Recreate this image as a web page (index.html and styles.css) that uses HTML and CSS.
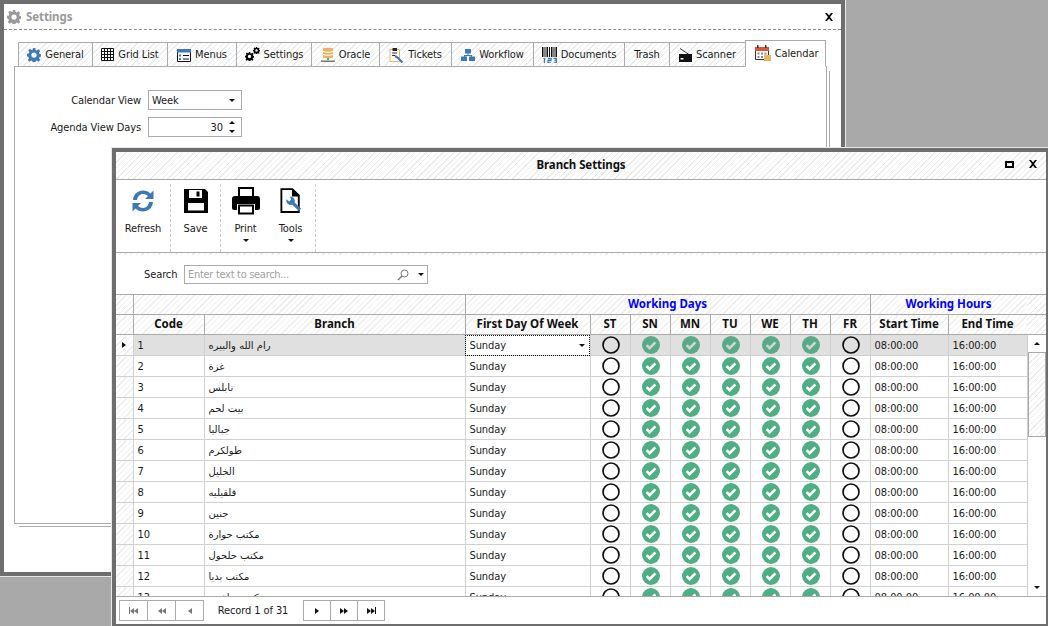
FILE: index.html
```html
<!DOCTYPE html>
<html lang="en">
  <head>
    <meta charset="UTF-8" />
    <title>Branch Settings</title>
    <link rel="stylesheet" href="styles.css">
  </head>
  <body>
    <svg class="defs" width="0" height="0">
      <symbol id="yes" viewBox="0 0 18 18">
        <circle cx="9" cy="9" r="9" fill="#4fae84"/>
        <path d="M4.6 9.2 7.6 12.2 13.4 6.4" fill="none" stroke="#fff" stroke-width="2.6"/>
      </symbol>
      <symbol id="yes-dim" viewBox="0 0 18 18">
        <circle cx="9" cy="9" r="9" fill="#5aa988"/>
        <path d="M4.6 9.2 7.6 12.2 13.4 6.4" fill="none" stroke="#c9d8d1" stroke-width="2.6"/>
      </symbol>
      <symbol id="no" viewBox="0 0 18 18">
        <circle cx="9" cy="9" r="8" fill="none" stroke="#111" stroke-width="1.7"/>
      </symbol>
      <symbol id="gear" viewBox="0 0 16 16">
        <path d="M6.6 0h2.8l.4 2.2 1.4.6 1.9-1.3 2 2-1.3 1.9.6 1.4 2.1.4v2.800l-2.100.4-.6 1.400 1.300 1.900-2 2-1.900-1.300-1.400.6-.4 2.100H6.600l-.4-2.100-1.400-.6-1.900 1.300-2-2 1.300-1.900-.6-1.400L0 9.400V6.600l2.100-.4.6-1.400L1.400 2.900l2-2 1.900 1.300 1.400-.6z M8 5a3 3 0 1 0 0 6 3 3 0 0 0 0-6z" fill-rule="evenodd"/>
      </symbol>
      <symbol id="x" viewBox="0 0 10 8">
        <path d="M1 0h2l2 2.500L7 0h2L6 4l3 4H7L5 5.500 3 8H1l3-4z"/>
      </symbol>
    </svg>

    <div class="window settings">
      <div class="settings-title">
        <svg class="title-gear" width="14" height="14"><use href="#gear"/></svg>
        <span>Settings</span>
        <svg class="close" width="10" height="8"><use href="#x"/></svg>
      </div>
      <div class="tabs">
        <div class="tab w-general">
          <svg class="blue" width="14" height="14"><use href="#gear"/></svg>General
        </div>
        <div class="tab w-grid">
          <svg width="13" height="13" viewBox="0 0 13 13" fill="none" stroke="#111"><path d="M.5.5h12v12H.500z M.5 3.500h12 M.5 6.500h12 M.5 9.500h12 M3.500.5v12 M6.500.5v12 M9.500.5v12"/></svg>Grid List
        </div>
        <div class="tab w-menus">
          <svg width="14" height="14" viewBox="0 0 14 14"><path d="M.5 1.500h13v12H.500z" fill="#fff" stroke="#111"/><path d="M0 1h14v3.500H0z" fill="#3d7ab5"/><path d="M2 6.500h2v2H2zM2 10h2v2H2z" fill="#3d7ab5"/><path d="M6 7.500h6M6 11h6" stroke="#111"/></svg>Menus
        </div>
        <div class="tab w-settings">
          <svg width="15" height="15" viewBox="0 0 15 15"><use href="#gear" x="0" y="5" width="9" height="9"/><use href="#gear" x="8" y="0" width="7" height="7"/></svg>Settings
        </div>
        <div class="tab w-oracle">
          <svg width="14" height="16" viewBox="0 0 14 16"><path d="M2 1.500C2 .5 12 .5 12 1.500v9c0 1-10 1-10 0z" fill="#e9b35f"/><path d="M2 4.500c2 1 8 1 10 0M2 7.500c2 1 8 1 10 0" stroke="#fff" fill="none"/><path d="M6 11h2v2H6z" fill="#4fae84"/><path d="M0 13.500h14v1.500H0z" fill="#777"/></svg>Oracle
        </div>
        <div class="tab w-tickets">
          <svg width="15" height="16" viewBox="0 0 15 16"><path d="M1 2.500h9.500v12H1z" fill="#fff" stroke="#e9b35f"/><path d="M3.500 1h4.500v3H3.500z" fill="#222"/><path d="M3 6h5M3 8.500h3" stroke="#333"/><path d="M6 9l2.500 1.500 5 5" stroke="#3d7ab5" stroke-width="2.200" fill="none"/></svg>Tickets
        </div>
        <div class="tab w-workflow">
          <svg width="14" height="12" viewBox="0 0 14 12" fill="#3d7ab5"><path d="M4 0h6v4.500H4zM0 7.500h6V12H0zM8 7.500h6V12H8z"/><path d="M6.500 4h1v2h3.500v2h-1V7H4v1H3V6h3.500z"/></svg>Workflow
        </div>
        <div class="tab w-documents">
          <svg width="15" height="16" viewBox="0 0 15 16"><path d="M0 0h1.500v10H0zM2.500 0h1v10h-1zM4.500 0h1.500v10H4.500zM7 0h1v10H7zM9 0h1.500v10H9zM11.500 0h1v10h-1zM13.500 0h1.500v10h-1.500z" fill="#111"/><path d="M1.500 11.500h1v4.500M6 11.500h3v2H6v2.500h3M11.500 11.500h3v2h-2 2v2.500h-3" fill="none" stroke="#3d7ab5" stroke-width="1.300"/></svg>Documents
        </div>
        <div class="tab w-trash">Trash</div>
        <div class="tab w-scanner">
          <svg width="13" height="14" viewBox="0 0 13 14"><path d="M1 .5 10 6.500" stroke="#333" fill="none"/><path d="M0 6h13v8H0z" fill="#111"/><path d="M1.500 10h3v1.500h-3z" fill="#fff"/></svg>Scanner
        </div>
        <div class="tab active w-calendar">
          <svg width="16" height="17" viewBox="0 0 16 17"><path d="M.5 3.500h13v11H.500z" fill="#fff" stroke="#333"/><path d="M0 2h14v4H0z" fill="#d2573f"/><path d="M2 0h1.500v3H2zM10 0h1.500v3H10z" fill="#333"/><path d="M2.500 7.500h2v2h-2zM6 7.500h2v2H6zM2.500 11h2v2h-2zM6 11h2v2H6zM9.500 7.500h2v2h-2z" fill="#888"/><path d="M9 10h7v6H9z" fill="#e9b35f"/></svg>Calendar
        </div>
      </div>
      <div class="page">
        <div class="form">
          <div class="form-row">
            <label>Calendar View</label>
            <div class="field">
              <span class="field-text">Week</span>
              <i class="arrow-down"></i>
            </div>
          </div>
          <div class="form-row">
            <label>Agenda View Days</label>
            <div class="field">
              <span class="field-text right">30</span>
              <span class="spin"><i class="arrow-up"></i><i class="arrow-down"></i></span>
            </div>
          </div>
        </div>
      </div>
    </div>

    <div class="window branch">
      <div class="branch-title hatch">
        <span>Branch Settings</span>
        <span class="win-buttons"><i class="restore"></i><svg class="close" width="10" height="8"><use href="#x"/></svg></span>
      </div>

      <div class="ribbon">
        <div class="group">
          <div class="tool w-refresh">
            <svg width="26" height="26" viewBox="0 0 26 26" fill="#3d7ab5"><path d="M3 12C3.500 6 8 2.500 13 2.500c3 0 5.500 1 7.500 3L23.500 2.500V11h-8.500l3-3c-1.400-1.300-3-2-5-2-3 0-5.500 2.200-6 6z"/><path d="M23 14c-.5 6-5 9.500-10 9.500-3 0-5.500-1-7.500-3L2.500 23.500V15H11l-3 3c1.400 1.300 3 2 5 2 3 0 5.500-2.200 6-6z"/></svg>
            <span>Refresh</span>
          </div>
        </div>
        <div class="group">
          <div class="tool w-save">
            <svg width="26" height="26" viewBox="0 0 26 26"><path d="M1 1h21l3 3v21H1z" fill="#000"/><path d="M6 2h13v8H6z" fill="#fff"/><path d="M13.500 3.500h3v5h-3z" fill="#000"/><path d="M5 15h16v7.500H5z" fill="#fff"/></svg>
            <span>Save</span>
          </div>
        </div>
        <div class="group last">
          <div class="tool w-print">
            <svg width="28" height="28" viewBox="0 0 28 28"><path d="M7 1h14v9H7z" fill="#fff" stroke="#000" stroke-width="2"/><path d="M3 9h22a3 3 0 0 1 3 3v9a2 2 0 0 1-2 2h-3v-6H5v6H2a2 2 0 0 1-2-2v-9a3 3 0 0 1 3-3z" fill="#000"/><path d="M7 18.500h14v8H7z" fill="#fff" stroke="#000" stroke-width="2"/></svg>
            <span>Print</span>
            <i class="arrow-down"></i>
          </div>
          <div class="tool w-tools">
            <svg width="22" height="28" viewBox="0 0 24 28"><path d="M1.500 1h12l7 7v18h-19z" fill="#fff" stroke="#000" stroke-width="2"/><path d="M13 1v8h8" fill="#000"/><path d="M11 9a5 5 0 0 1 5 6.500l7 7-2.500 2.500-7-7A5 5 0 0 1 7 12l3 2.500 2-2z" fill="#3d7ab5"/></svg>
            <span>Tools</span>
            <i class="arrow-down"></i>
          </div>
        </div>
      </div>
      <div class="strip hatch"></div>

      <div class="search-bar">
        <label>Search</label>
        <div class="search-box">
          <span class="placeholder">Enter text to search...</span>
          <svg width="12" height="12" viewBox="0 0 12 12" fill="none" stroke="#777"><circle cx="7.500" cy="4.500" r="3.500"/><path d="M5 7 1 11" stroke-width="1.500"/></svg>
          <i class="arrow-down"></i>
        </div>
      </div>

      <div class="grid-wrap">
        <table class="grid">
          <colgroup>
            <col class="c-ind"><col class="c-code"><col class="c-branch"><col class="c-first">
            <col class="c-day"><col class="c-day"><col class="c-day"><col class="c-day">
            <col class="c-day"><col class="c-day"><col class="c-day">
            <col class="c-start"><col class="c-end">
          </colgroup>
          <tr class="band">
            <th class="ind"></th>
            <th colspan="2"></th>
            <th colspan="8" class="blue-head">Working Days</th>
            <th colspan="2" class="blue-head">Working Hours</th>
          </tr>
          <tr class="head">
            <th class="ind"></th>
            <th>Code</th><th>Branch</th><th>First Day Of Week</th>
            <th>ST</th><th>SN</th><th>MN</th><th>TU</th><th>WE</th><th>TH</th><th>FR</th>
            <th>Start Time</th><th>End Time</th>
          </tr>
          <tr class="selected">
            <td class="ind"><i class="arrow-right"></i></td><td>1</td><td class="ar" dir="rtl">رام الله والبيره</td>
            <td class="editor"><span>Sunday</span><i class="arrow-down"></i></td>
            <td><svg><use href="#no"/></svg></td><td><svg><use href="#yes-dim"/></svg></td><td><svg><use href="#yes-dim"/></svg></td><td><svg><use href="#yes-dim"/></svg></td><td><svg><use href="#yes-dim"/></svg></td><td><svg><use href="#yes-dim"/></svg></td><td><svg><use href="#no"/></svg></td>
            <td>08:00:00</td><td>16:00:00</td>
          </tr>
          <tr>
            <td class="ind"></td><td>2</td><td class="ar" dir="rtl">غزة</td><td>Sunday</td>
            <td><svg><use href="#no"/></svg></td><td><svg><use href="#yes"/></svg></td><td><svg><use href="#yes"/></svg></td><td><svg><use href="#yes"/></svg></td><td><svg><use href="#yes"/></svg></td><td><svg><use href="#yes"/></svg></td><td><svg><use href="#no"/></svg></td>
            <td>08:00:00</td><td>16:00:00</td>
          </tr>
          <tr>
            <td class="ind"></td><td>3</td><td class="ar" dir="rtl">نابلس</td><td>Sunday</td>
            <td><svg><use href="#no"/></svg></td><td><svg><use href="#yes"/></svg></td><td><svg><use href="#yes"/></svg></td><td><svg><use href="#yes"/></svg></td><td><svg><use href="#yes"/></svg></td><td><svg><use href="#yes"/></svg></td><td><svg><use href="#no"/></svg></td>
            <td>08:00:00</td><td>16:00:00</td>
          </tr>
          <tr>
            <td class="ind"></td><td>4</td><td class="ar" dir="rtl">بيت لحم</td><td>Sunday</td>
            <td><svg><use href="#no"/></svg></td><td><svg><use href="#yes"/></svg></td><td><svg><use href="#yes"/></svg></td><td><svg><use href="#yes"/></svg></td><td><svg><use href="#yes"/></svg></td><td><svg><use href="#yes"/></svg></td><td><svg><use href="#no"/></svg></td>
            <td>08:00:00</td><td>16:00:00</td>
          </tr>
          <tr>
            <td class="ind"></td><td>5</td><td class="ar" dir="rtl">جباليا</td><td>Sunday</td>
            <td><svg><use href="#no"/></svg></td><td><svg><use href="#yes"/></svg></td><td><svg><use href="#yes"/></svg></td><td><svg><use href="#yes"/></svg></td><td><svg><use href="#yes"/></svg></td><td><svg><use href="#yes"/></svg></td><td><svg><use href="#no"/></svg></td>
            <td>08:00:00</td><td>16:00:00</td>
          </tr>
          <tr>
            <td class="ind"></td><td>6</td><td class="ar" dir="rtl">طولكرم</td><td>Sunday</td>
            <td><svg><use href="#no"/></svg></td><td><svg><use href="#yes"/></svg></td><td><svg><use href="#yes"/></svg></td><td><svg><use href="#yes"/></svg></td><td><svg><use href="#yes"/></svg></td><td><svg><use href="#yes"/></svg></td><td><svg><use href="#no"/></svg></td>
            <td>08:00:00</td><td>16:00:00</td>
          </tr>
          <tr>
            <td class="ind"></td><td>7</td><td class="ar" dir="rtl">الخليل</td><td>Sunday</td>
            <td><svg><use href="#no"/></svg></td><td><svg><use href="#yes"/></svg></td><td><svg><use href="#yes"/></svg></td><td><svg><use href="#yes"/></svg></td><td><svg><use href="#yes"/></svg></td><td><svg><use href="#yes"/></svg></td><td><svg><use href="#no"/></svg></td>
            <td>08:00:00</td><td>16:00:00</td>
          </tr>
          <tr>
            <td class="ind"></td><td>8</td><td class="ar" dir="rtl">قلقيليه</td><td>Sunday</td>
            <td><svg><use href="#no"/></svg></td><td><svg><use href="#yes"/></svg></td><td><svg><use href="#yes"/></svg></td><td><svg><use href="#yes"/></svg></td><td><svg><use href="#yes"/></svg></td><td><svg><use href="#yes"/></svg></td><td><svg><use href="#no"/></svg></td>
            <td>08:00:00</td><td>16:00:00</td>
          </tr>
          <tr>
            <td class="ind"></td><td>9</td><td class="ar" dir="rtl">جنين</td><td>Sunday</td>
            <td><svg><use href="#no"/></svg></td><td><svg><use href="#yes"/></svg></td><td><svg><use href="#yes"/></svg></td><td><svg><use href="#yes"/></svg></td><td><svg><use href="#yes"/></svg></td><td><svg><use href="#yes"/></svg></td><td><svg><use href="#no"/></svg></td>
            <td>08:00:00</td><td>16:00:00</td>
          </tr>
          <tr>
            <td class="ind"></td><td>10</td><td class="ar" dir="rtl">مكتب حوارة</td><td>Sunday</td>
            <td><svg><use href="#no"/></svg></td><td><svg><use href="#yes"/></svg></td><td><svg><use href="#yes"/></svg></td><td><svg><use href="#yes"/></svg></td><td><svg><use href="#yes"/></svg></td><td><svg><use href="#yes"/></svg></td><td><svg><use href="#no"/></svg></td>
            <td>08:00:00</td><td>16:00:00</td>
          </tr>
          <tr>
            <td class="ind"></td><td>11</td><td class="ar" dir="rtl">مكتب حلحول</td><td>Sunday</td>
            <td><svg><use href="#no"/></svg></td><td><svg><use href="#yes"/></svg></td><td><svg><use href="#yes"/></svg></td><td><svg><use href="#yes"/></svg></td><td><svg><use href="#yes"/></svg></td><td><svg><use href="#yes"/></svg></td><td><svg><use href="#no"/></svg></td>
            <td>08:00:00</td><td>16:00:00</td>
          </tr>
          <tr>
            <td class="ind"></td><td>12</td><td class="ar" dir="rtl">مكتب بديا</td><td>Sunday</td>
            <td><svg><use href="#no"/></svg></td><td><svg><use href="#yes"/></svg></td><td><svg><use href="#yes"/></svg></td><td><svg><use href="#yes"/></svg></td><td><svg><use href="#yes"/></svg></td><td><svg><use href="#yes"/></svg></td><td><svg><use href="#no"/></svg></td>
            <td>08:00:00</td><td>16:00:00</td>
          </tr>
          <tr>
            <td class="ind"></td><td>13</td><td class="ar" dir="rtl">مكتب سلفيت</td><td>Sunday</td>
            <td><svg><use href="#no"/></svg></td><td><svg><use href="#yes"/></svg></td><td><svg><use href="#yes"/></svg></td><td><svg><use href="#yes"/></svg></td><td><svg><use href="#yes"/></svg></td><td><svg><use href="#yes"/></svg></td><td><svg><use href="#no"/></svg></td>
            <td>08:00:00</td><td>16:00:00</td>
          </tr>
        </table>
        <div class="scroll">
          <div class="scroll-corner hatch"></div>
          <div class="scroll-corner hatch"></div>
          <div class="scroll-btn"><i class="arrow-up"></i></div>
          <div class="scroll-track">
            <div class="scroll-thumb hatch"></div>
          </div>
          <div class="scroll-btn"><i class="arrow-down"></i></div>
        </div>
      </div>

      <div class="pager">
        <div class="pager-group">
          <span class="pager-btn dim"><i class="bar"></i><i class="arrow-left"></i><i class="arrow-left"></i></span>
          <span class="pager-btn dim"><i class="arrow-left"></i><i class="arrow-left"></i></span>
          <span class="pager-btn dim"><i class="arrow-left"></i></span>
        </div>
        <span class="record">Record 1 of 31</span>
        <div class="pager-group next">
          <span class="pager-btn"><i class="arrow-right"></i></span>
          <span class="pager-btn"><i class="arrow-right"></i><i class="arrow-right"></i></span>
          <span class="pager-btn"><i class="arrow-right"></i><i class="arrow-right"></i><i class="bar"></i></span>
        </div>
      </div>
    </div>
  </body>
</html>
```

FILE: styles.css
```css
html,
body {
  margin: 0;
  height: 100%;
}
body {
  position: relative;
  width: 1048px;
  height: 626px;
  overflow: hidden;
  background-color: #a9a9a9;
  font-family: "DejaVu Sans Condensed", "Liberation Sans", sans-serif;
  font-size: 11px;
  letter-spacing: -0.1px;
  color: #1a1a1a;
}
.defs {
  position: absolute;
}
i {
  display: block;
}
.hatch,
.tab,
.ind,
.band th,
.head th {
  background-color: #fff;
  background-image: repeating-linear-gradient(135deg, #fff 0, #fff 3px, #ebebeb 3px, #ebebeb 4px);
}
.arrow-down {
  width: 0;
  height: 0;
  border-left: 3px solid transparent;
  border-right: 3px solid transparent;
  border-top: 3px solid #111;
}
.arrow-up {
  width: 0;
  height: 0;
  border-left: 3px solid transparent;
  border-right: 3px solid transparent;
  border-bottom: 3px solid #111;
}
.arrow-right {
  width: 0;
  height: 0;
  border-top: 3px solid transparent;
  border-bottom: 3px solid transparent;
  border-left: 4px solid #111;
}
.arrow-left {
  width: 0;
  height: 0;
  border-top: 3px solid transparent;
  border-bottom: 3px solid transparent;
  border-right: 4px solid #777;
}
.bar {
  width: 1px;
  height: 7px;
  background-color: #111;
}
.close {
  fill: #000;
}

/* windows */
.window {
  position: absolute;
  box-sizing: border-box;
  border: 4px solid #6e6e6e;
  outline: 1px solid #e8e8e8;
  background-color: #fff;
}
.settings {
  left: 0;
  top: 0;
  width: 845px;
  height: 576px;
}
.branch {
  left: 112px;
  top: 148px;
  width: 938px;
  height: 480px;
}

/* settings window */
.settings-title {
  height: 26px;
  box-sizing: border-box;
  border-bottom: 1px dashed #8a8a8a;
  display: flex;
  align-items: center;
  padding: 0 7px 0 3px;
  font-family: "Noto Sans", sans-serif;
  font-weight: bold;
  color: #999;
  font-size: 11.5px;
}
.title-gear {
  fill: #999;
  margin-right: 5px;
}
.settings-title .close {
  margin-left: auto;
}
.tabs {
  display: flex;
  align-items: flex-end;
  height: 36px;
  padding-left: 14px;
  box-sizing: border-box;
  position: relative;
  z-index: 1;
}
.tab {
  box-sizing: border-box;
  height: 25px;
  margin-bottom: -1px;
  border: 1px solid #aaa;
  margin-right: -1px;
  display: flex;
  align-items: center;
  justify-content: center;
  gap: 4px;
  white-space: nowrap;
}
.tab svg {
  flex-shrink: 0;
}
.tab .blue {
  fill: #3d7ab5;
}
.tab.active {
  height: 27px;
  padding-left: 2px;
  background: #fff;
  border-bottom-color: #fff;
  margin-right: 0;
}
.w-general { width: 75px; }
.w-grid { width: 76px; }
.w-menus { width: 70px; }
.w-settings { width: 76px; }
.w-oracle { width: 69px; }
.w-tickets { width: 73px; }
.w-workflow { width: 83px; }
.w-documents { width: 92px; }
.w-trash { width: 46px; }
.w-scanner { width: 77px; }
.w-calendar { width: 81px; }
.page {
  box-sizing: border-box;
  margin-left: 10px;
  width: 813px;
  height: 458px;
  border: 1px solid #aaa;
  box-shadow: 3px 3px 0 -1px #fff, 4px 4px 0 -1px #aaa;
}
.form {
  padding: 23px 0 0 0;
  display: flex;
  flex-direction: column;
  gap: 7px;
}
.form-row {
  display: flex;
  align-items: center;
  gap: 7px;
}
.form-row label {
  width: 126px;
  text-align: right;
}
.field {
  box-sizing: border-box;
  width: 94px;
  height: 20px;
  border: 1px solid #aaa;
  display: flex;
  align-items: center;
  padding: 0 6px 0 3px;
}
.field-text {
  flex: 1;
}
.field-text.right {
  text-align: right;
  padding-right: 6px;
}
.spin {
  display: flex;
  flex-direction: column;
  gap: 6px;
}

/* branch window */
.branch-title {
  box-sizing: border-box;
  height: 28px;
  padding-bottom: 2px;
  border-bottom: 1px solid #aaa;
  display: flex;
  align-items: center;
  justify-content: center;
  position: relative;
  font-family: "Noto Sans", sans-serif;
  font-weight: bold;
  font-size: 11.5px;
  color: #111;
}
.win-buttons {
  position: absolute;
  right: 8px;
  top: 8px;
  display: flex;
  align-items: center;
  gap: 14px;
}
.restore {
  box-sizing: border-box;
  width: 9px;
  height: 7px;
  border: 2px solid #000;
}
.ribbon {
  display: flex;
  height: 72px;
  border-bottom: 1px solid #aaa;
}
.strip {
  height: 2px;
}
.group {
  display: flex;
  align-items: flex-start;
  height: 68px;
  margin-top: 4px;
  border-right: 1px dashed #ccc;
}
.group.last {
  padding-right: 4px;
}
.tool {
  display: flex;
  flex-direction: column;
  align-items: center;
  padding-top: 3px;
}
.tool svg {
  height: 28px;
}
.tool span {
  margin-top: 6px;
  line-height: 16px;
}
.tool .arrow-down {
  margin-top: 2px;
}
.w-refresh { width: 54px; }
.w-save { width: 49px; }
.w-print { width: 49px; }
.w-tools { width: 41px; }
.search-bar {
  box-sizing: border-box;
  display: flex;
  align-items: center;
  gap: 6px;
  padding: 10px 0 0 28px;
  height: 29px;
}
.search-bar label {
  width: 34px;
}
.search-box {
  box-sizing: border-box;
  width: 244px;
  height: 19px;
  border: 1px solid #aaa;
  display: flex;
  align-items: center;
  padding: 0 3px 0 3px;
  gap: 9px;
}
.placeholder {
  flex: 1;
  color: #a0a0a0;
  letter-spacing: -0.3px;
}
.grid-wrap {
  position: relative;
  margin-top: 10px;
  height: 301px;
  overflow: hidden;
  border-top: 1px solid #aaa;
  border-bottom: 1px solid #aaa;
}
.grid {
  table-layout: fixed;
  width: 911px;
  border-collapse: collapse;
}
.c-ind { width: 17px; }
.c-code { width: 71px; }
.c-branch { width: 261px; }
.c-first { width: 125px; }
.c-day { width: 40px; }
.c-start { width: 78px; }
.c-end { width: 79px; }
.grid th {
  height: 17px;
  padding: 0 0 2px 0;
  border: 1px solid #aaa;
  border-top: 0;
  font-family: "Noto Sans", sans-serif;
  font-weight: bold;
  font-size: 11.5px;
  letter-spacing: 0;
  color: #111;
  white-space: nowrap;
}
.grid .blue-head {
  color: #0000ff;
}
.grid td {
  height: 20px;
  padding: 0 4px;
  border: 1px solid #d0d0d0;
  border-top: 0;
  white-space: nowrap;
  overflow: hidden;
}
.grid svg {
  display: block;
  width: 18px;
  height: 18px;
  margin-left: 7px;
}
.grid td.ind {
  padding: 0 0 0 6px;
}
.grid tr:first-child th,
.grid tr th:first-child,
.grid tr td:first-child {
  border-left: 0;
}
.grid td.ar {
  font-family: "DejaVu Sans", sans-serif;
  font-size: 10px;
  text-align: left;
}
.selected td {
  background-color: #e0e0e0;
}
.grid td.editor {
  background-color: #fff;
  outline: 1px dotted #111;
  outline-offset: -1px;
}
.editor {
  position: relative;
}
.editor .arrow-down {
  position: absolute;
  right: 5px;
  top: 9px;
}
.scroll {
  position: absolute;
  top: 0;
  right: 0;
  width: 19px;
  height: 100%;
  display: flex;
  flex-direction: column;
}
.scroll-corner {
  height: 19px;
  border-bottom: 1px solid #aaa;
  flex-shrink: 0;
}
.scroll-btn {
  height: 17px;
  display: flex;
  align-items: center;
  justify-content: center;
  flex-shrink: 0;
}
.scroll-track {
  flex: 1;
  border-left: 1px dashed #ccc;
}
.scroll-thumb {
  box-sizing: border-box;
  height: 85px;
  border: 1px solid #aaa;
}
.pager {
  display: flex;
  align-items: center;
  padding: 3px 0 0 3px;
}
.pager-group {
  display: flex;
}
.pager-btn {
  box-sizing: border-box;
  width: 29px;
  height: 21px;
  margin-right: -1px;
  border: 1px solid #aaa;
  display: flex;
  align-items: center;
  justify-content: center;
}
.next .pager-btn {
  width: 28px;
}
.pager-btn.dim .bar {
  background-color: #777;
}
.record {
  width: 100px;
  text-align: center;
}
```
